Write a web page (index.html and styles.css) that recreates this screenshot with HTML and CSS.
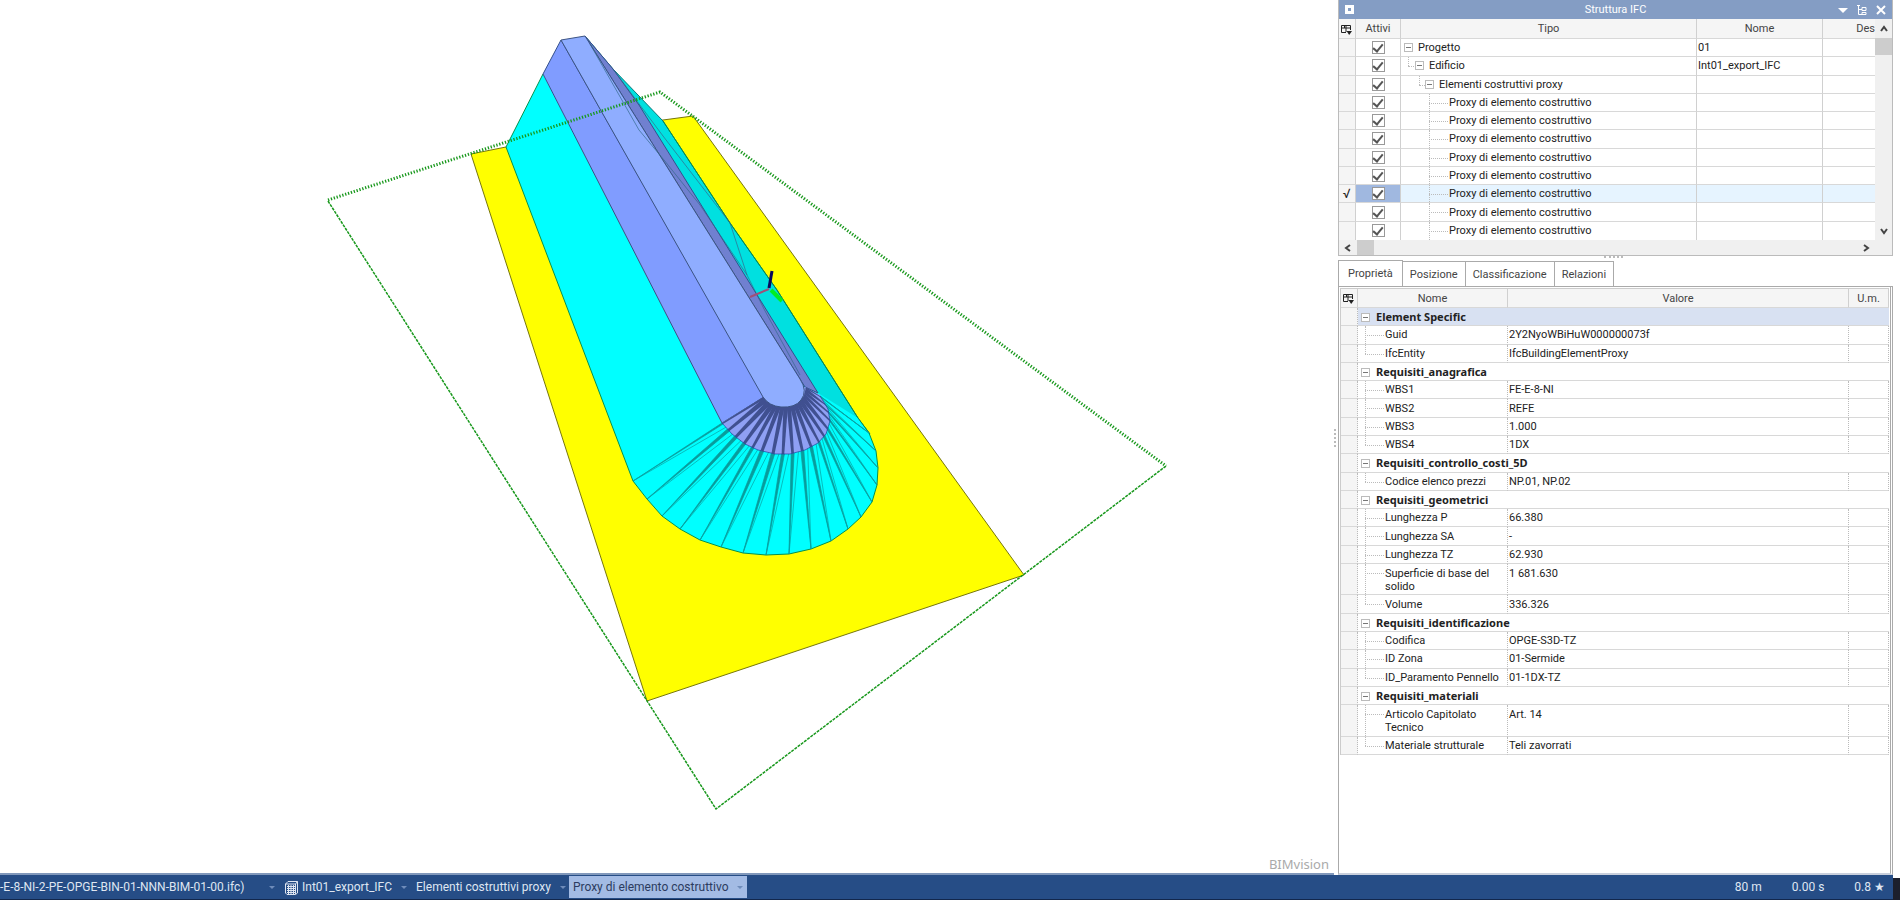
FILE: index.html
```
<!DOCTYPE html>
<html lang="it">

<head>
    <meta charset="UTF-8">
    <meta name="viewport" content="width=device-width, initial-scale=1.0">
    <title>BIMvision</title>
    <link rel="stylesheet" href="styles.css">
</head>

<body>
    <div class="app">
        <div class="workspace">
            <main class="viewport">
                <svg class="scene" viewBox="0 0 1334 873" role="img" aria-label="Modello 3D">
                    <!-- Base gialla -->
                    <polygon class="base" points="471,154 506,147 663,120 693,116 1024,575 647,701" />
                    <!-- Scarpate -->
                    <polygon class="slope-right" points="585,36 613,69 663,121 730,223 777,290 858,418 870,434 818,440 780,340" />
                    <path class="slope" d="M543,74 L506,147 L633,481 L647,499 L662,516 L680,529 L700,540 L721,547 L743,553 L766,555 L789,554 L811,549 L831,541 L848,529 L861,517 L872,502 L877,485 L878,468 L876,451 L869,433 L858,418 L818,393 L722,423 Z" />
                    <path class="edge-green" d="M543,74 L506,147 L633,481 L647,499 L662,516 L680,529 L700,540 L721,547 L743,553 L766,555 L789,554 L811,549 L831,541 L848,529 L861,517 L872,502 L877,485 L878,468 L876,451 L869,433 L858,418 L777,290 L730,223 L663,121" />
                    <!-- Rilevato -->
                    <polygon class="flank" points="561,40 543,74 722,423 764,397" />
                    <polygon class="flank-right" points="585,36 613,69 639,105 818,393 805,387" />
                    <path class="cone" d="M764,397 L722,423 L732,434 L745,444 L758,450 L775,454 L790,454 L805,450 L818,443 L826,434 L830,421 L828,409 L820,395 L805,387 Z" />
                    <g id="fan"></g>
                    <path class="crest" d="M561,40 L585,36 L800,379 Q808,391 801,400 Q795,408 781,407 Q769,406 763,397 Z" />
                    <path class="edge-thin" d="M613,69 L663,136 L730,223 L747,275 L764,309 L800,375 M590,44 L639,130 L664,160 L700,205 L747,275" />
                    <!-- Ingombro -->
                    <path class="bounds-thick" d="M328,200 L660,92 L1166,466" />
                    <path class="bounds" d="M328,201 L716,809 L1166,466" />
                    <!-- Assi -->
                    <path class="axis-x" d="M750,297 L769,289" />
                    <path class="axis-y" d="M771,290 L782,301" />
                    <path class="axis-z" d="M769,288 L772,271" />
                </svg>
                <span class="brand">BIMvision</span>
            </main>
            <div class="splitter-v"><span class="grip-v"></span></div>

            <aside class="side">
                <section class="structure">
                    <header class="panel-title">
                        <span class="panel-icon"></span>
                        <h2>Struttura IFC</h2>
                        <button class="title-btn" aria-label="Menu"><svg width="12" height="12"><path d="M1 4h10L6 9z" fill="#fff" /></svg></button>
                        <button class="title-btn" aria-label="Albero"><svg width="12" height="12" fill="none" stroke="#fff"><path d="M1 1.500h3M2.500 1v9.500H6M2.500 5.500H6M6 3.500h4v3H6zM6 8.500h4v2H6z" /></svg></button>
                        <button class="title-btn" aria-label="Chiudi"><svg width="12" height="12"><path d="M2 2l8 8M10 2l-8 8" stroke="#fff" stroke-width="2" /></svg></button>
                    </header>
                    <div class="tree-area">
                        <table class="tree">
                            <colgroup>
                                <col class="c-mark"><col class="c-active"><col><col class="c-name"><col class="c-desc">
                            </colgroup>
                            <thead>
                                <tr>
                                    <th><svg class="cols-icon" width="12" height="12"><path d="M6 9.500H1.500V2.500h9V7M1.500 5h9M4.500 2.500V5M6 2.500V9" /><path class="fill" d="M6.500 8H12L9.200 12z" /></svg></th>
                                    <th>Attivi</th>
                                    <th>Tipo</th>
                                    <th>Nome</th>
                                    <th class="cut">Des</th>
                                </tr>
                            </thead>
                            <tbody>
                                <tr><td></td><td><input type="checkbox" checked aria-label="Progetto"></td><td class="lvl0"><button class="toggle" aria-label="Comprimi"></button>Progetto</td><td>01</td><td></td></tr>
                                <tr><td></td><td><input type="checkbox" checked aria-label="Edificio"></td><td class="lvl1"><button class="toggle" aria-label="Comprimi"></button>Edificio</td><td>Int01_export_IFC</td><td></td></tr>
                                <tr><td></td><td><input type="checkbox" checked aria-label="Elementi costruttivi proxy"></td><td class="lvl2"><button class="toggle" aria-label="Comprimi"></button>Elementi costruttivi proxy</td><td></td><td></td></tr>
                                <tr><td></td><td><input type="checkbox" checked aria-label="Proxy 1"></td><td class="lvl3">Proxy di elemento costruttivo</td><td></td><td></td></tr>
                                <tr><td></td><td><input type="checkbox" checked aria-label="Proxy 2"></td><td class="lvl3">Proxy di elemento costruttivo</td><td></td><td></td></tr>
                                <tr><td></td><td><input type="checkbox" checked aria-label="Proxy 3"></td><td class="lvl3">Proxy di elemento costruttivo</td><td></td><td></td></tr>
                                <tr><td></td><td><input type="checkbox" checked aria-label="Proxy 4"></td><td class="lvl3">Proxy di elemento costruttivo</td><td></td><td></td></tr>
                                <tr><td></td><td><input type="checkbox" checked aria-label="Proxy 5"></td><td class="lvl3">Proxy di elemento costruttivo</td><td></td><td></td></tr>
                                <tr class="selected"><td>√</td><td><input type="checkbox" checked aria-label="Proxy 6"></td><td class="lvl3">Proxy di elemento costruttivo</td><td></td><td></td></tr>
                                <tr><td></td><td><input type="checkbox" checked aria-label="Proxy 7"></td><td class="lvl3">Proxy di elemento costruttivo</td><td></td><td></td></tr>
                                <tr><td></td><td><input type="checkbox" checked aria-label="Proxy 8"></td><td class="lvl3">Proxy di elemento costruttivo</td><td></td><td></td></tr>
                            </tbody>
                        </table>
                        <div class="scroll-v">
                            <button aria-label="Su"><svg width="10" height="10"><path d="M2 7l3-4 3 4" /></svg></button>
                            <span class="thumb-v"></span>
                            <button aria-label="Giù"><svg width="10" height="10"><path d="M2 3l3 4 3-4" /></svg></button>
                        </div>
                    </div>
                    <div class="scroll-h">
                        <button aria-label="Sinistra"><svg width="10" height="10"><path d="M7 2L3 5l4 3" /></svg></button>
                        <span class="thumb-h"></span>
                        <button class="right" aria-label="Destra"><svg width="10" height="10"><path d="M3 2l4 3-4 3" /></svg></button>
                    </div>
                </section>
                <div class="splitter-h"><span class="grip-h"></span></div>

                <nav class="tabs" role="tablist">
                    <button class="tab active" role="tab" aria-selected="true">Proprietà</button>
                    <button class="tab" role="tab">Posizione</button>
                    <button class="tab" role="tab">Classificazione</button>
                    <button class="tab" role="tab">Relazioni</button>
                </nav>
                <section class="properties">
                    <table class="props">
                        <colgroup>
                            <col class="c-mark"><col class="c-prop"><col><col class="c-unit">
                        </colgroup>
                        <thead>
                            <tr>
                                <th><svg class="cols-icon" width="12" height="12"><path d="M6 9.500H1.500V2.500h9V7M1.500 5h9M4.500 2.500V5M6 2.500V9" /><path class="fill" d="M6.500 8H12L9.200 12z" /></svg></th>
                                <th>Nome</th>
                                <th>Valore</th>
                                <th>U.m.</th>
                            </tr>
                        </thead>
                        <tbody>
                            <tr class="group current"><td></td><td colspan="3"><button class="toggle" aria-label="Comprimi"></button>Element Specific</td></tr>
                            <tr><td></td><td>Guid</td><td>2Y2NyoWBiHuW000000073f</td><td></td></tr>
                            <tr class="last"><td></td><td>IfcEntity</td><td>IfcBuildingElementProxy</td><td></td></tr>
                            <tr class="group"><td></td><td colspan="3"><button class="toggle" aria-label="Comprimi"></button>Requisiti_anagrafica</td></tr>
                            <tr><td></td><td>WBS1</td><td>FE-E-8-NI</td><td></td></tr>
                            <tr><td></td><td>WBS2</td><td>REFE</td><td></td></tr>
                            <tr><td></td><td>WBS3</td><td>1.000</td><td></td></tr>
                            <tr class="last"><td></td><td>WBS4</td><td>1DX</td><td></td></tr>
                            <tr class="group"><td></td><td colspan="3"><button class="toggle" aria-label="Comprimi"></button>Requisiti_controllo_costi_5D</td></tr>
                            <tr class="last"><td></td><td>Codice elenco prezzi</td><td>NP.01, NP.02</td><td></td></tr>
                            <tr class="group"><td></td><td colspan="3"><button class="toggle" aria-label="Comprimi"></button>Requisiti_geometrici</td></tr>
                            <tr><td></td><td>Lunghezza P</td><td>66.380</td><td></td></tr>
                            <tr><td></td><td>Lunghezza SA</td><td>-</td><td></td></tr>
                            <tr><td></td><td>Lunghezza TZ</td><td>62.930</td><td></td></tr>
                            <tr class="tall"><td></td><td>Superficie di base del<br>solido</td><td>1 681.630</td><td></td></tr>
                            <tr class="last"><td></td><td>Volume</td><td>336.326</td><td></td></tr>
                            <tr class="group"><td></td><td colspan="3"><button class="toggle" aria-label="Comprimi"></button>Requisiti_identificazione</td></tr>
                            <tr><td></td><td>Codifica</td><td>OPGE-S3D-TZ</td><td></td></tr>
                            <tr><td></td><td>ID Zona</td><td>01-Sermide</td><td></td></tr>
                            <tr class="last"><td></td><td>ID_Paramento Pennello</td><td>01-1DX-TZ</td><td></td></tr>
                            <tr class="group"><td></td><td colspan="3"><button class="toggle" aria-label="Comprimi"></button>Requisiti_materiali</td></tr>
                            <tr class="tall"><td></td><td>Articolo Capitolato<br>Tecnico</td><td>Art. 14</td><td></td></tr>
                            <tr class="last"><td></td><td>Materiale strutturale</td><td>Teli zavorrati</td><td></td></tr>
                        </tbody>
                    </table>
                </section>
            </aside>
        </div>

        <footer class="status">
            <nav class="crumbs">
                <button class="crumb first">-E-8-NI-2-PE-OPGE-BIN-01-NNN-BIM-01-00.ifc)</button>
                <span class="arrow"></span>
                <button class="crumb">
                    <svg width="14" height="15" fill="none" stroke="#dfe6f2"><path d="M1.500 4v9l1.500 1.500h8.500L13.500 13V1.500H4L1.500 4H11.500v10M11.500 4l2-2.500" /><path d="M3 6.500h8M3 8.500h8M3 10.500h8M3 12.500h8M4.500 5v9M7 5v9M9.500 5v9" /></svg>
                    Int01_export_IFC
                </button>
                <span class="arrow"></span>
                <button class="crumb">Elementi costruttivi proxy</button>
                <span class="arrow"></span>
                <button class="crumb current">Proxy di elemento costruttivo<span class="arrow"></span></button>
            </nav>
            <div class="stats">
                <span>80 m</span>
                <span>0.00 s</span>
                <span>0.8 ★</span>
            </div>
        </footer>
    </div>

    <script>
        // Ventaglio di facce del cono: cresta -> bordo rilevato -> piede scarpata
        const crest = [[763, 397], [774, 405], [785, 407], [796, 405], [804, 396], [806, 387]];
        const middle = [[722, 423], [732, 434], [745, 444], [758, 450], [775, 454], [790, 454], [805, 450], [818, 443], [826, 434], [830, 421], [828, 409], [820, 396]];
        const foot = [[633, 481], [647, 499], [662, 516], [680, 529], [700, 540], [721, 547], [743, 553], [766, 555], [789, 554], [811, 549], [831, 541], [848, 529], [861, 517], [872, 502], [877, 485], [878, 468], [876, 451], [869, 433]];
        const fan = document.getElementById('fan');

        // Punto lungo una spezzata, t da 0 a 1
        function pointAt(line, t) {
            const pos = Math.max(0, Math.min(t, 1)) * (line.length - 1);
            const i = Math.min(Math.floor(pos), line.length - 2);
            const f = pos - i;
            return [0, 1].map(k => line[i][k] + (line[i + 1][k] - line[i][k]) * f);
        }

        function addShape(tag, points, className) {
            const shape = document.createElementNS('http://www.w3.org/2000/svg', tag);
            shape.setAttribute('points', points.map(p => p.join(',')).join(' '));
            shape.setAttribute('class', className);
            fan.appendChild(shape);
        }

        foot.forEach((point, i) => {
            const t = i / (foot.length - 1);
            addShape('polygon', [point, pointAt(middle, t - 0.009), pointAt(middle, t + 0.009)], 'fan-slope');
            addShape('polyline', [point, pointAt(middle, t + 0.035)], 'fan-line');
            addShape('polygon', [pointAt(middle, t - 0.008), pointAt(middle, t + 0.008), pointAt(crest, t + 0.04), pointAt(crest, t - 0.04)], 'fan-cone');
        });
        addShape('polyline', middle, 'fan-rim');
    </script>
</body>

</html>
```
FILE: styles.css
```
* {
    box-sizing: border-box;
}

body {
    margin: 0;
    font-family: Roboto, "Noto Sans", sans-serif;
    font-size: 11px;
    color: #222;
    background-color: #fff;
}

button {
    font: inherit;
    color: inherit;
    background: none;
    border: none;
    padding: 0;
}

.app {
    display: flex;
    flex-direction: column;
    height: 100vh;
}

.workspace {
    display: flex;
    flex: 1;
    min-height: 0;
}

/* Vista 3D */
.viewport {
    position: relative;
    flex: 1;
    min-width: 0;
    border-bottom: 2px solid #8198bb;
}

.scene {
    display: block;
    width: 100%;
    height: 100%;
}

.scene * {
    stroke-linejoin: round;
}

.base {
    fill: #ff0;
    stroke: #77770a;
}

.slope {
    fill: #0ff;
}

.slope-right {
    fill: #00e0e0;
    stroke: #087878;
}

.edge-green {
    fill: none;
    stroke: #08904c;
}

.flank {
    fill: #809cff;
    stroke: #34508c;
}

.flank-right {
    fill: #7080d0;
    stroke: #34508c;
}

.cone {
    fill: #8fa0f4;
}

.crest {
    fill: #8fadff;
    stroke: #3c5484;
}

.edge-thin {
    fill: none;
    stroke: #34688c;
    stroke-width: 0.7;
}

.fan-slope {
    fill: #089c9c;
    stroke: #089c9c;
    stroke-width: 0.7;
}

.fan-line {
    fill: none;
    stroke: #08a0a0;
    stroke-width: 0.7;
}

.fan-cone {
    fill: #405090;
}

.fan-rim {
    fill: none;
    stroke: #2444a0;
    stroke-width: 0.7;
}

.bounds,
.bounds-thick {
    fill: none;
    stroke: #18981c;
    stroke-dasharray: 3 1;
}

.bounds {
    stroke-width: 1.500;
}

.bounds-thick {
    stroke-width: 3;
    stroke-dasharray: 1.300 1.700;
}

.axis-x {
    stroke: #a05078;
    stroke-width: 2;
}

.axis-y {
    stroke: #0e2;
    stroke-width: 4;
}

.axis-z {
    stroke: #08085c;
    stroke-width: 3;
}

.brand {
    position: absolute;
    right: 5px;
    bottom: 0;
    font-family: "Noto Sans", sans-serif;
    font-size: 13px;
    color: #aaa;
}

.splitter-v {
    display: flex;
    align-items: center;
    width: 4px;
}

.grip-v {
    height: 18px;
    border-left: 2px dotted #bbb;
}

/* Pannello laterale */
.side {
    display: flex;
    flex-direction: column;
    width: 562px;
    padding-right: 7px;
}

.structure {
    border: 1px solid #bbb;
    border-top: none;
}

.panel-title {
    display: flex;
    align-items: center;
    gap: 7px;
    height: 19px;
    padding: 0 5px 0 6px;
    color: #fff;
    background-color: #849dc4;
}

.panel-title h2 {
    flex: 1;
    margin: 0 0 0 40px;
    font-size: 11px;
    font-weight: normal;
    text-align: center;
}

.panel-icon {
    width: 9px;
    height: 9px;
    border: 3px solid #fff;
    background-color: #849dc4;
}

.title-btn {
    width: 12px;
    height: 12px;
}

.title-btn svg,
.cols-icon {
    display: block;
}

.tree-area {
    display: flex;
}

table {
    flex: 1;
    width: 100%;
    table-layout: fixed;
    border-collapse: separate;
    border-spacing: 0;
    line-height: 13px;
}

th,
td {
    padding: 0 1px;
    border-right: 1px solid #d0d0d0;
    border-bottom: 1px solid #d8d8d8;
    text-align: left;
    white-space: nowrap;
}

th {
    height: 19px;
    font-weight: normal;
    text-align: center;
    color: #444;
    background-color: #f5f5f5;
}

td:first-child {
    background-color: #f5f5f5;
}

.c-mark {
    width: 17px;
}

.c-active {
    width: 45px;
}

.c-name {
    width: 126px;
}

.c-desc {
    width: 52px;
}

.c-prop {
    width: 150px;
}

.c-unit {
    width: 40px;
}

.cols-icon {
    fill: none;
    stroke: #222;
}

.cols-icon .fill {
    fill: #222;
    stroke: none;
}

.tree {
    height: 221px;
}

.tree th {
    height: 20px;
}

.tree td {
    height: 18px;
}

.tree .cut {
    text-align: right;
    padding: 0;
}

.tree th:last-child,
.tree td:last-child {
    border-right: none;
}

.tree tr:last-child td {
    border-bottom: none;
}

.tree td:nth-child(2) {
    text-align: center;
}

.tree input {
    appearance: none;
    display: block;
    width: 13px;
    height: 13px;
    margin: 0 auto;
    border: 1px solid #999;
    background-color: #fff;
}

.tree input:checked::after {
    content: "";
    display: block;
    width: 4px;
    height: 8px;
    margin: 0 auto;
    border: solid #555;
    border-width: 0 2px 2px 0;
    transform: rotate(40deg);
}

.selected td {
    background-color: #e6f4ff;
}

.selected td:first-child {
    padding: 0;
    font-size: 13px;
    text-align: center;
    background-color: #f5f5f5;
}

.tree .selected td:nth-child(2) {
    background-color: #a0b8e0;
}

.toggle {
    position: relative;
    display: inline-block;
    width: 9px;
    height: 9px;
    margin-right: 5px;
    border: 1px solid #bbb;
    background: linear-gradient(#777, #777) center / 5px 1px no-repeat #fff;
}

/* Linee punteggiate dell'albero */
.lvl0,
.lvl1,
.lvl2,
.lvl3,
.props td:nth-child(2) {
    position: relative;
}

.tree .lvl0 {
    padding-left: 3px;
}

.tree .lvl1 {
    padding-left: 14px;
}

.tree .lvl2 {
    padding-left: 24px;
}

.tree .lvl3 {
    padding-left: 48px;
}

.lvl1::before,
.lvl2::before,
.lvl3::before,
.props tr:not(.group) td:nth-child(2)::before {
    content: "";
    position: absolute;
    top: 0;
    bottom: 0;
    border-left: 1px dotted #bbb;
}

.lvl1::after,
.lvl2::after,
.lvl3::after,
.props tr:not(.group) td:nth-child(2)::after {
    content: "";
    position: absolute;
    top: 9px;
    border-top: 1px dotted #bbb;
}

.lvl1::before,
.lvl1::after {
    left: 7px;
    width: 6px;
}

.lvl2::before,
.lvl2::after {
    left: 18px;
    width: 6px;
}

.lvl1::before,
.lvl2::before,
.props tr.last td:nth-child(2)::before {
    bottom: auto;
    height: 9px;
}

.lvl3::before,
.lvl3::after {
    left: 28px;
    width: 19px;
}

/* Barre di scorrimento */
.scroll-v {
    display: flex;
    flex-direction: column;
    width: 17px;
    background-color: #f0f0f0;
}

.scroll-v button {
    width: 17px;
    height: 19px;
}

.scroll-v button:last-child {
    margin-top: auto;
}

.scroll-v svg,
.scroll-h svg {
    display: block;
    margin: auto;
    fill: none;
    stroke: #444;
    stroke-width: 2;
}

.thumb-v {
    height: 17px;
    background-color: #cdcdcd;
}

.scroll-h {
    display: flex;
    height: 15px;
    padding-right: 17px;
    background-color: #f0f0f0;
}

.scroll-h button {
    width: 18px;
}

.scroll-h .right {
    margin-left: auto;
}

.thumb-h {
    width: 17px;
    background-color: #cdcdcd;
}

.splitter-h {
    display: flex;
    justify-content: center;
    height: 4px;
}

.grip-h {
    width: 19px;
    margin-right: 5px;
    border-top: 2px dotted #bbb;
}

/* Schede */
.tabs {
    display: flex;
    align-items: flex-end;
}

.tab {
    height: 25px;
    padding: 0 7px;
    border: 1px solid #aaa;
    border-left: none;
    border-bottom: none;
    color: #444;
}

.tab.active {
    height: 26px;
    padding: 0 9px;
    border-left: 1px solid #aaa;
}

.properties {
    flex: 1;
    min-height: 0;
    padding: 1px;
    border: 1px solid #aaa;
    border-right: 3px double #aaa;
    border-bottom: 2px solid #c8cfdc;
    overflow: hidden;
}

.props {
    height: 467px;
    border-left: 1px solid #ccc;
    border-top: 1px solid #ccc;
}

.props td {
    height: 18px;
    border-right-style: dotted;
    border-right-color: #bbb;
}

.props .tall td {
    height: 31px;
    vertical-align: top;
    padding-top: 3px;
}

.props td:nth-child(2) {
    padding-left: 27px;
}

.props .group td:nth-child(2) {
    padding-left: 3px;
    border-right: none;
    font-family: "Noto Sans", sans-serif;
    font-weight: bold;
}

.props .toggle {
    margin-right: 6px;
}

.props .current td:nth-child(2) {
    background-color: #d8e1f2;
}

.props tr:not(.group) td:nth-child(2)::before,
.props tr:not(.group) td:nth-child(2)::after {
    left: 7px;
    width: 19px;
}

/* Barra di stato */
.status {
    display: flex;
    justify-content: space-between;
    align-items: center;
    height: 25px;
    margin-right: 7px;
    padding-right: 8px;
    border-bottom: 1px solid #12274c;
    font-size: 12px;
    color: #dfe6f2;
    background-color: #264d86;
    box-shadow: 7px 3px 0 #1c1f2c;
}

.crumbs {
    display: flex;
    align-items: center;
    gap: 9px;
}

.crumb {
    display: flex;
    align-items: center;
    gap: 4px;
    height: 22px;
    white-space: nowrap;
}

.crumb.first {
    min-width: 260px;
}

.crumb.current {
    gap: 9px;
    margin-left: -6px;
    padding: 0 4px;
    color: #2c3c60;
    background-color: #a3bbe4;
}

.arrow {
    border: 3px solid transparent;
    border-top-color: #6f8cba;
    border-bottom: none;
}

.stats {
    display: flex;
    gap: 30px;
}
```
